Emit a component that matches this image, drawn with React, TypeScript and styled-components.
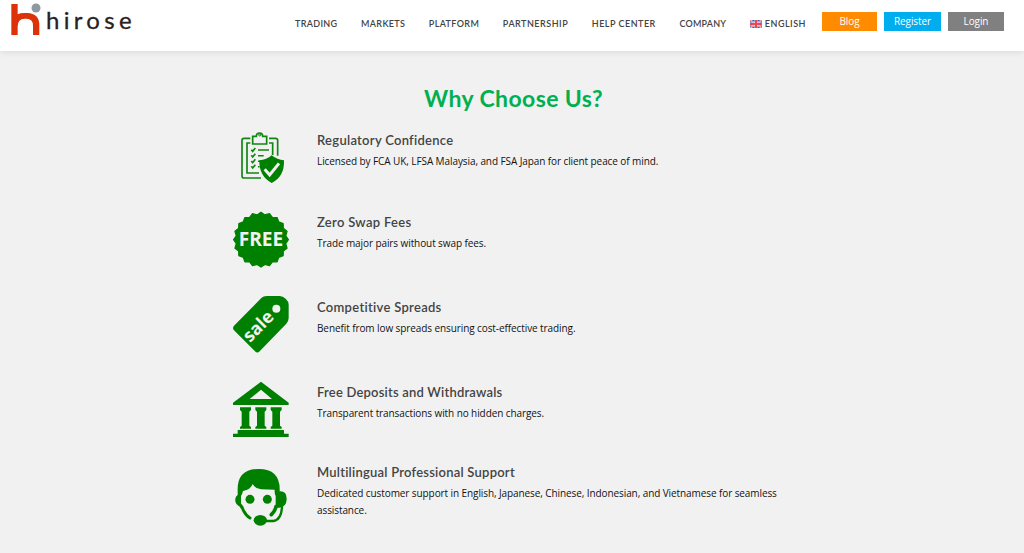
import type { ReactNode } from "react";
import styled, { createGlobalStyle } from "styled-components";

type NavItem = { label: string; tracking: number; flag?: boolean };

const NAV_ITEMS: NavItem[] = [
  { label: "TRADING", tracking: 0.33 },
  { label: "MARKETS", tracking: 0.33 },
  { label: "PLATFORM", tracking: 0.37 },
  { label: "PARTNERSHIP", tracking: 0.5 },
  { label: "HELP CENTER", tracking: 0.5 },
  { label: "COMPANY", tracking: 0.2 },
  { label: "ENGLISH", tracking: 0.5, flag: true },
];

const BUTTONS = [
  { label: "Blog", color: "#ff8c00", width: 55 },
  { label: "Register", color: "#00aeef", width: 57 },
  { label: "Login", color: "#808080", width: 56 },
];

type Feature = {
  title: string;
  text: string;
  icon: ReactNode;
  height: number;
  offset: number;
  tracking: number;
};

const FEATURES: Feature[] = [
  {
    title: "Regulatory Confidence",
    text: "Licensed by FCA UK, LFSA Malaysia, and FSA Japan for client peace of mind.",
    icon: <ClipboardIcon />,
    height: 80,
    offset: 5,
    tracking: 0.28,
  },
  {
    title: "Zero Swap Fees",
    text: "Trade major pairs without swap fees.",
    icon: <FreeIcon />,
    height: 85,
    offset: 7,
    tracking: 0.3,
  },
  {
    title: "Competitive Spreads",
    text: "Benefit from low spreads ensuring cost-effective trading.",
    icon: <SaleIcon />,
    height: 85,
    offset: 7,
    tracking: 0.3,
  },
  {
    title: "Free Deposits and Withdrawals",
    text: "Transparent transactions with no hidden charges.",
    icon: <BankIcon />,
    height: 85,
    offset: 7,
    tracking: 0.2,
  },
  {
    title: "Multilingual Professional Support",
    text: "Dedicated customer support in English, Japanese, Chinese, Indonesian, and Vietnamese for seamless assistance.",
    icon: <SupportIcon />,
    height: 85,
    offset: 2,
    tracking: 0.23,
  },
];

function App() {
  return (
    <>
      <GlobalStyle />
      <Header>
        <Logo href="#">
          <LogoMark />
          <LogoText>hirose</LogoText>
        </Logo>
        <Nav>
          {NAV_ITEMS.map((item) => (
            <NavLink key={item.label} href="#" $tracking={item.tracking}>
              {item.flag && <Flag />}
              {item.label}
            </NavLink>
          ))}
        </Nav>
        <Actions>
          {BUTTONS.map((button) => (
            <ActionButton key={button.label} href="#" $color={button.color} $width={button.width}>
              {button.label}
            </ActionButton>
          ))}
        </Actions>
      </Header>
      <Main>
        <Title>Why Choose Us?</Title>
        <FeatureList>
          {FEATURES.map((feature) => (
            <FeatureRow key={feature.title} $height={feature.height}>
              {feature.icon}
              <FeatureBody $offset={feature.offset}>
                <FeatureTitle $tracking={feature.tracking}>{feature.title}</FeatureTitle>
                <FeatureText>{feature.text}</FeatureText>
              </FeatureBody>
            </FeatureRow>
          ))}
        </FeatureList>
      </Main>
    </>
  );
}

export default App;

function LogoMark() {
  return (
    <svg width="32" height="36" viewBox="30 0 96 108">
      <path
        d="M34 12H53V43Q60 39 73 39H82Q118 40 118 76V105H99V77Q99 56 79 56H74Q53 57 53 79V105H34Z"
        fill="#dc3109"
      />
      <circle cx="108" cy="24" r="13.5" fill="#8f98a1" />
    </svg>
  );
}

function Flag() {
  return (
    <FlagSvg width="12" height="8" viewBox="0 0 36 24">
      <rect width="36" height="24" fill="#2c5fb3" />
      <path d="M0 0L36 24M36 0L0 24" stroke="#f3dfe6" strokeWidth="5" />
      <path d="M0 0L36 24M36 0L0 24" stroke="#ef4d5f" strokeWidth="2" />
      <path d="M18 0V24M0 12H36" stroke="#f3dfe6" strokeWidth="9" />
      <path d="M18 0V24M0 12H36" stroke="#f04450" strokeWidth="6" />
    </FlagSvg>
  );
}

function ClipboardIcon() {
  return (
    <FeatureIcon viewBox="0 0 210 210">
      <g fill="none" stroke="#118511" strokeWidth="5">
        <path d="M76 40H57Q51 40 51 46V152Q51 159 58 159H108M132 40H151Q158 40 158 46V92" />
        <path d="M76 54H66V144H102M132 54H143V90" />
        <path d="M83 34H94Q94 24 104 24Q113 24 113 34H125V57H83Z" />
        <circle cx="104" cy="30" r="3" strokeWidth="3" />
        <path d="M79 74L83 79L91 69M79 91L83 96L91 86M79 108L83 113L91 103M79 124L83 129L91 119" strokeWidth="5" />
        <path d="M99 75H132M99 92H116M99 109H106M99 125H104" strokeWidth="4.5" />
      </g>
      <path
        d="M140 91Q157 105 177 106Q179 155 140 174Q102 154 103 106Q125 104 140 91Z"
        fill="#008000"
      />
      <path d="M119 133L134 150L162 115" fill="none" stroke="#f1f1f1" strokeWidth="9" />
    </FeatureIcon>
  );
}

// 20 rounded teeth around the badge
const BADGE_POINTS = Array.from({ length: 40 }, (_, i) => {
  const radius = i % 2 === 0 ? 82 : 75;
  const angle = (i * Math.PI) / 20 - Math.PI / 2;
  return `${108 + radius * Math.cos(angle)},${104 + radius * Math.sin(angle)}`;
}).join(" ");

function FreeIcon() {
  return (
    <FeatureIcon viewBox="0 0 210 210">
      <polygon points={BADGE_POINTS} fill="#008000" stroke="#008000" strokeWidth="4" strokeLinejoin="round" />
      <IconText x="108" y="122" fontSize="57" textLength="134" lengthAdjust="spacingAndGlyphs">
        FREE
      </IconText>
    </FeatureIcon>
  );
}

function SaleIcon() {
  return (
    <FeatureIcon viewBox="0 0 210 210">
      <path
        d="M27 107L106 27Q113 18 126 18H164Q174 18 182 26Q191 34 191 44V84Q191 93 184 101L104 184Q97 191 90 184L27 121Q21 114 27 107Z"
        fill="#008000"
      />
      <circle cx="154" cy="56" r="12" fill="#f1f1f1" />
      <g transform="translate(101 110) rotate(-45)">
        <IconText x="0" y="16" fontSize="53" textLength="106" lengthAdjust="spacingAndGlyphs">
          sale
        </IconText>
      </g>
    </FeatureIcon>
  );
}

function BankIcon() {
  return (
    <FeatureIcon viewBox="0 0 210 210">
      <g fill="#008000">
        <path fillRule="evenodd" d="M108 20L191 83V90H24V83ZM108 44L74 72H141Z" />
        <path d="M45 97H78V105L73 110V152L78 156V161H45V156L50 152V110L45 105Z" />
        <path d="M91 97H124V105L119 110V152L124 156V161H91V156L96 152V110L91 105Z" />
        <path d="M137 97H170V105L165 110V152L170 156V161H137V156L142 152V110L137 105Z" />
        <path d="M38 165H177V176H191V186H24V176H38Z" />
      </g>
    </FeatureIcon>
  );
}

function SupportIcon() {
  return (
    <FeatureIcon viewBox="0 0 210 210">
      <g fill="#008000">
        <path d="M38 94Q35 27 101 27Q167 27 164 94Q186 93 185 118Q184 141 164 143H152V108Q148 101 149 89L108 88Q91 87 83 72Q78 88 54 93Q52 102 48 108V137H40Q29 130 31 116Q32 109 38 105Z" />
        <circle cx="75" cy="118" r="13.5" />
        <circle cx="127" cy="118" r="13.5" />
        <ellipse cx="106" cy="181" rx="20" ry="16" />
      </g>
      <g fill="none" stroke="#008000" strokeLinecap="round">
        <path d="M43 132Q51 139 55 151Q64 168 75 174" strokeWidth="9" />
        <path d="M153 140Q150 154 139 164" strokeWidth="11" />
        <path d="M171 140Q169 180 145 183H120" strokeWidth="7" />
      </g>
    </FeatureIcon>
  );
}

const GlobalStyle = createGlobalStyle`
  * {
    box-sizing: border-box;
  }

  body {
    margin: 0;
    background: #f1f1f1;
    font-family: "Open Sans", "Noto Sans", sans-serif;
  }
`;

const Header = styled.header`
  display: flex;
  align-items: flex-start;
  height: 51px;
  padding-left: 10px;
  background: white;
  box-shadow: 0 1px 7px rgba(0, 0, 0, 0.1);
`;

const Logo = styled.a`
  display: flex;
  width: 285px;
  text-decoration: none;
`;

const LogoText = styled.span`
  margin: 5px 0 0 4px;
  font-family: Lato, sans-serif;
  font-size: 24px;
  line-height: 30px;
  letter-spacing: 4.3px;
  color: #2b2020;
  -webkit-text-stroke: 0.3px #2b2020;
`;

const Nav = styled.nav`
  display: flex;
  align-items: center;
  gap: 23.6px;
  width: 527px;
  height: 47px;
`;

const NavLink = styled.a<{ $tracking: number }>`
  display: flex;
  align-items: center;
  font-family: Lato, sans-serif;
  font-size: 9px;
  font-weight: 600;
  letter-spacing: ${({ $tracking }) => $tracking}px;
  white-space: nowrap;
  text-decoration: none;
  color: #444;
`;

const FlagSvg = styled.svg`
  margin-right: 3px;
`;

const Actions = styled.div`
  display: flex;
  gap: 7px;
  padding-top: 12px;
`;

const ActionButton = styled.a<{ $color: string; $width: number }>`
  width: ${({ $width }) => $width}px;
  height: 19px;
  font-size: 10px;
  line-height: 19px;
  letter-spacing: -0.1px;
  text-align: center;
  text-decoration: none;
  color: white;
  background: ${({ $color }) => $color};
`;

const Main = styled.main`
  padding-top: 32px;
`;

const Title = styled.h2`
  margin: 0;
  padding-left: 3px;
  font-family: Lato, sans-serif;
  font-size: 23px;
  font-weight: 700;
  line-height: 30px;
  letter-spacing: 0.4px;
  text-align: center;
  color: #00b050;
`;

const FeatureList = styled.div`
  width: 570px;
  margin: 12px 0 0 225px;
`;

const FeatureRow = styled.section<{ $height: number }>`
  display: flex;
  gap: 22px;
  height: ${({ $height }) => $height}px;
`;

const FeatureIcon = styled.svg`
  flex: none;
  width: 70px;
  height: 70px;
`;

const IconText = styled.text`
  font-family: "Open Sans", sans-serif;
  font-weight: 700;
  text-anchor: middle;
  fill: #f1f1f1;
`;

const FeatureBody = styled.div<{ $offset: number }>`
  padding-top: ${({ $offset }) => $offset}px;
`;

const FeatureTitle = styled.h3<{ $tracking: number }>`
  margin: 0 0 3px;
  font-family: Lato, sans-serif;
  font-size: 13px;
  font-weight: 600;
  line-height: 20px;
  letter-spacing: ${({ $tracking }) => $tracking}px;
  color: #444;
`;

const FeatureText = styled.p`
  margin: 0;
  font-size: 10px;
  line-height: 16.5px;
  letter-spacing: -0.09px;
  color: #111;
`;
